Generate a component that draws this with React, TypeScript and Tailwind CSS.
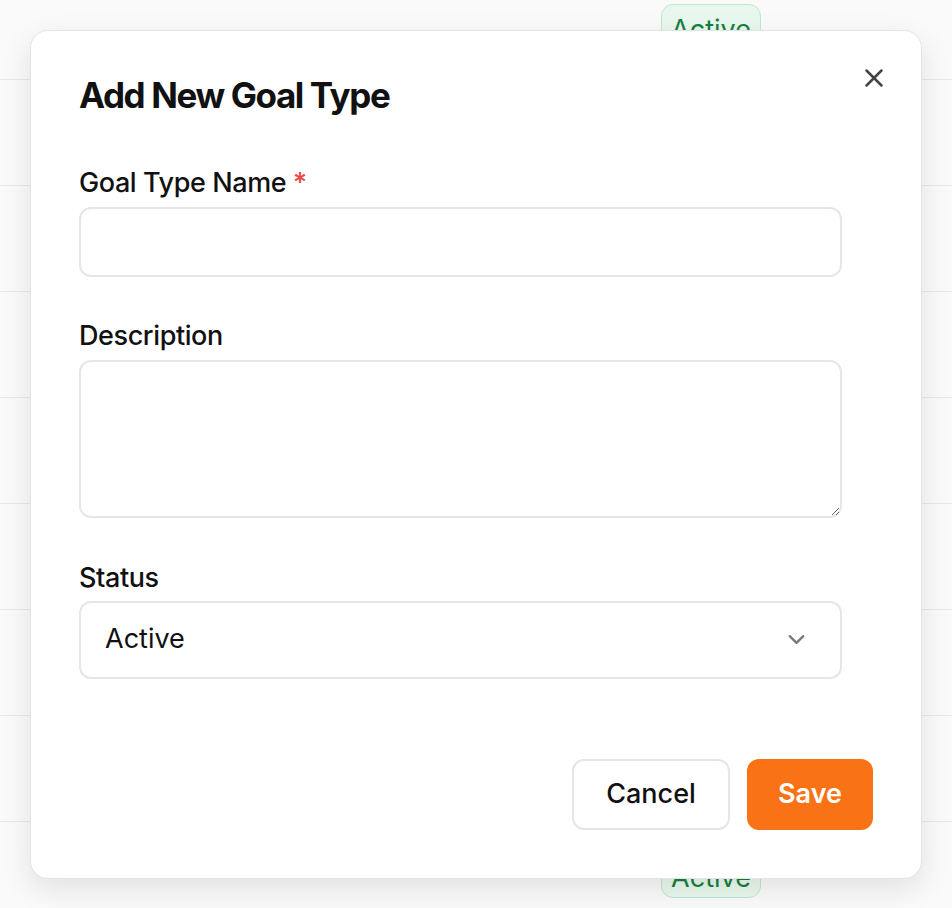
import { X, ChevronDown } from 'lucide-react';

const ROWS = Array.from({ length: 10 }, (_, i) => i);

function Background() {
  return (
    <div className="absolute inset-0 overflow-hidden bg-[#fafafa]">
      <div className="-mt-[26px]">
        {ROWS.map(i => (
          <div key={i} className="h-[106px] border-b border-[#e8e8e8] flex items-center">
            <div className="ml-[661px] w-[100px] h-[46px] rounded-xl border border-[#bfe8cc] bg-[#e9f8ee] text-[#15803d] text-[27px] leading-none pt-[6px] flex items-center justify-center">
              Active
            </div>
          </div>
        ))}
      </div>
    </div>
  );
}

export default function App() {
  return (
    <div className="relative w-[952px] h-[908px] overflow-hidden" style={{ fontFamily: 'Inter, "Noto Sans", sans-serif' }}>
      <Background />
      <div className="absolute inset-0 flex items-center justify-center">
        <div className="relative w-[892px] h-[849px] bg-white rounded-[18px] border border-[#e4e4e4] shadow-[0_10px_30px_rgba(0,0,0,0.10)] px-12 pt-12 pb-12 flex flex-col">
          <button className="absolute right-[32px] top-[32px] text-[#444]">
            <X size={30} strokeWidth={2} />
          </button>

          <h2 className="text-[35px] font-bold tracking-[-0.04em] text-[#111] leading-[32px]">Add New Goal Type</h2>

          <div className="mt-[56px] w-[763px] flex flex-col">
            <label className="text-[27px] font-medium tracking-[-0.015em] text-[#111] leading-[32px]">
              Goal Type Name <span className="text-[#ef4444]">*</span>
            </label>
            <input className="mt-[8px] h-[70px] rounded-xl border-2 border-[#e6e6e6] px-6 text-[26px] outline-none" />

            <label className="mt-[43px] text-[27px] font-medium tracking-[-0.015em] text-[#111] leading-[32px]">Description</label>
            <textarea className="mt-[8px] h-[158px] rounded-xl border-2 border-[#e6e6e6] px-6 py-4 text-[26px] outline-none" />

            <label className="mt-[44px] text-[27px] font-medium tracking-[-0.015em] text-[#111] leading-[32px]">Status</label>
            <div className="mt-[7px] h-[78px] rounded-xl border-2 border-[#e6e6e6] pl-[24px] pr-[30px] flex items-center justify-between">
              <span className="text-[27px] text-[#111]">Active</span>
              <ChevronDown size={27} className="text-[#777]" strokeWidth={2} />
            </div>
          </div>

          <div className="mt-auto flex justify-end gap-[17px]">
            <button className="w-[158px] h-[71px] rounded-xl border-2 border-[#e6e6e6] bg-white text-[27px] font-medium text-[#111]">Cancel</button>
            <button className="w-[126px] h-[71px] rounded-xl bg-[#f97316] text-[27px] font-semibold text-white">Save</button>
          </div>
        </div>
      </div>
    </div>
  );
}
